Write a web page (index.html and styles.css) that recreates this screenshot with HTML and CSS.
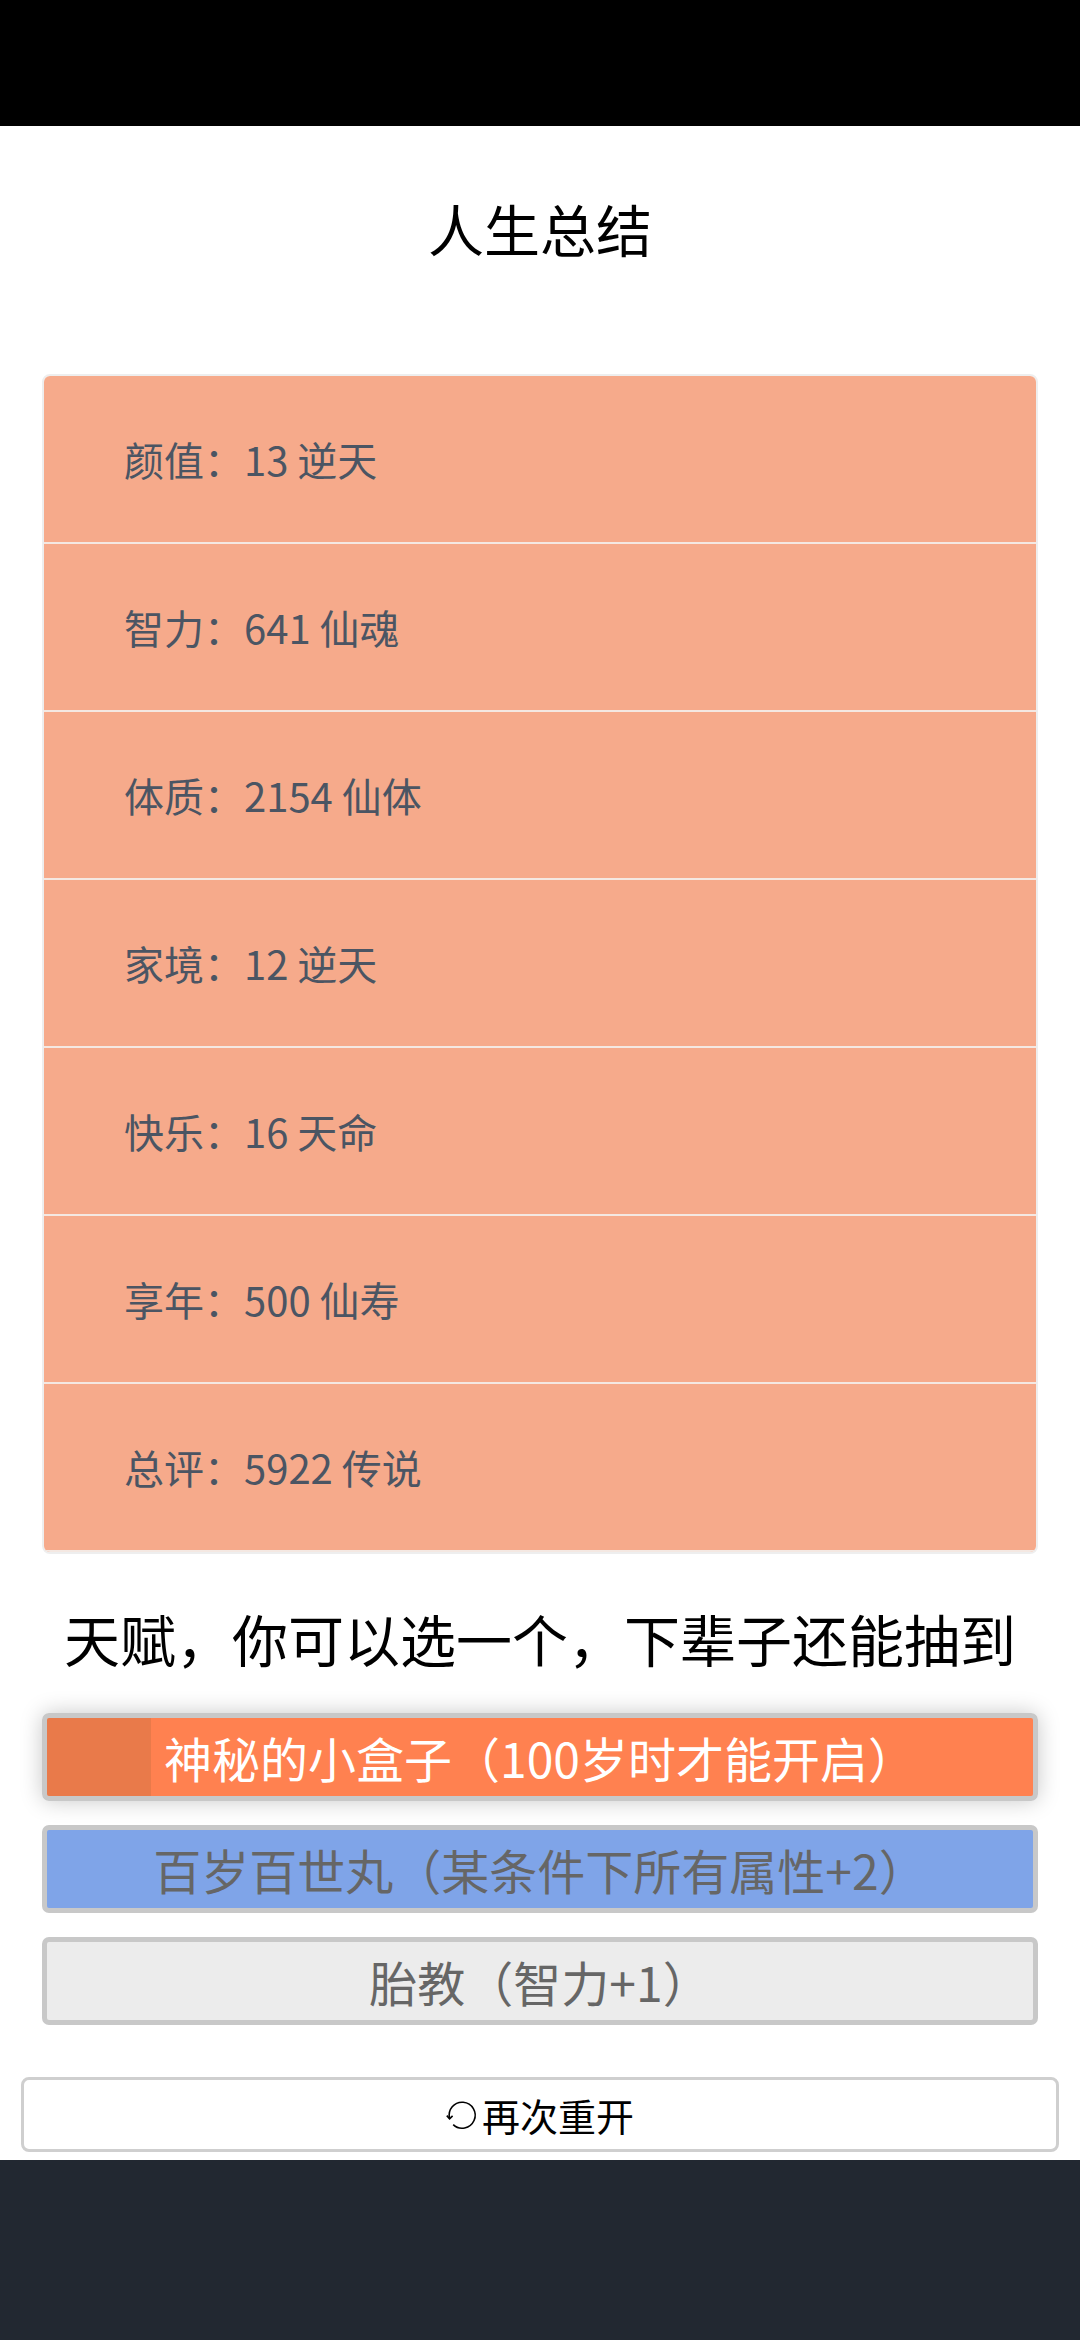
FILE: index.html
```html
<!DOCTYPE html>
<html lang="zh-CN">
<head>
    <meta charset="UTF-8">
    <meta name="viewport" content="width=device-width, initial-scale=1.0">
    <title>人生总结</title>
    <link rel="stylesheet" href="styles.css">
</head>
<body>
    <div class="status-bar"></div>
    <div class="page">
        <h1 class="title">人生总结</h1>

        <ul class="summary">
            <li class="summary-row">颜值：13 逆天</li>
            <li class="summary-row">智力：641 仙魂</li>
            <li class="summary-row">体质：2154 仙体</li>
            <li class="summary-row">家境：12 逆天</li>
            <li class="summary-row">快乐：16 天命</li>
            <li class="summary-row">享年：500 仙寿</li>
            <li class="summary-row">总评：5922 传说</li>
        </ul>

        <h2 class="talent-title">天赋，你可以选一个，下辈子还能抽到</h2>

        <ul class="talents">
            <li class="talent talent-orange selected">神秘的小盒子（100岁时才能开启）</li>
            <li class="talent talent-blue">百岁百世丸（某条件下所有属性+2）</li>
            <li class="talent talent-gray">胎教（智力+1）</li>
        </ul>

        <button class="restart">
            <svg class="restart-icon" viewBox="0 0 32 32" width="32" height="32">
                <path d="M3.6 19.5 A13 13 0 1 1 7.2 25.6" fill="none" stroke="#000" stroke-width="1.6"/>
                <path d="M0.8 16.6 L3.6 19.8 L6.6 16.9" fill="none" stroke="#000" stroke-width="1.6"/>
            </svg>再次重开
        </button>
    </div>
    <div class="footer"></div>
</body>
</html>
```

FILE: styles.css
```css
body {
    margin: 0;
    background-color: #fff;
    color: #000;
    font-family: "Noto Sans CJK SC", "Noto Sans", sans-serif;
}
.status-bar {
    height: 126px;
    background-color: #000;
}
.page {
    display: flex;
    flex-direction: column;
    padding-bottom: 8px;
}
.title {
    margin: 60px 0 104px;
    font-size: 56px;
    font-weight: normal;
    line-height: 84px;
    text-align: center;
}
.summary {
    list-style: none;
    margin: 0 42px;
    padding: 0;
    border: 2px solid #eeeeee;
    border-radius: 8px;
    overflow: hidden;
}
.summary-row {
    height: 166px;
    display: flex;
    align-items: center;
    padding-left: 80px;
    background-color: #f6aa8b;
    border-bottom: 2px solid #f4e8e2;
    color: #4b5563;
    font-size: 40px;
}
.talent-title {
    margin: 42px 0 0;
    font-size: 56px;
    font-weight: normal;
    line-height: 84px;
    text-align: center;
}
.talents {
    list-style: none;
    margin: 33px 42px 0;
    padding: 0;
    display: flex;
    flex-direction: column;
    gap: 24px;
}
.talent {
    height: 78px;
    display: flex;
    align-items: center;
    justify-content: center;
    border: 5px solid #c8c8c8;
    border-radius: 7px;
    font-size: 48px;
    color: #666;
}
.talent-orange {
    background: linear-gradient(to right, #e97a4a 104px, #ff8150 104px);
    color: #fff;
}
.talent-blue {
    background-color: #7fa4e8;
}
.talent-gray {
    background-color: #ececec;
}
.selected {
    box-shadow: 0 0 22px rgba(0, 0, 0, 0.22);
}
.restart {
    margin: 52px 21px 0;
    height: 75px;
    display: flex;
    align-items: center;
    justify-content: center;
    background-color: #fff;
    border: 3px solid #cfcfcf;
    border-radius: 8px;
    font-family: inherit;
    font-size: 38px;
    color: #000;
    padding: 0;
}
.restart-icon {
    margin-right: 4px;
}
.footer {
    height: 180px;
    background-color: #222831;
}
```
